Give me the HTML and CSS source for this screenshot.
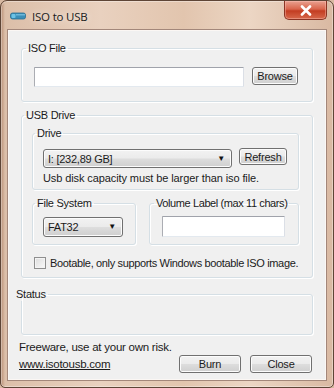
FILE: index.html
```html
<!DOCTYPE html>
<html>
<head>
    <title>ISO to USB</title>
    <meta charset="utf-8">
    <link rel="stylesheet" href="styles.css">
</head>
<body>
    <div class="window">
        <div class="titlebar">
            <svg class="app-icon" width="16" height="10" viewBox="0 0 16 10">
                <rect x="0.5" y="2" width="15" height="6" rx="2" fill="#3b8fb8" stroke="#2a6f93" stroke-width="0.8"/>
                <rect x="1.5" y="3" width="4" height="4" rx="1" fill="#6cc3e6"/>
                <rect x="6" y="3" width="9" height="1.5" fill="#8fd3ee" opacity="0.6"/>
            </svg>
            <span class="title">ISO to USB</span>
            <div class="close-btn">
                <svg width="12" height="11" viewBox="0 0 12 11">
                    <path d="M2 1.5 L10 9.5 M10 1.5 L2 9.5" stroke="#fff" stroke-width="2.6" stroke-linecap="round"/>
                </svg>
            </div>
        </div>

        <div class="client">
            <fieldset class="group iso-group">
                <legend>ISO File</legend>
                <div class="row">
                    <input type="text" class="textbox iso-path">
                    <button class="btn browse-btn">Browse</button>
                </div>
            </fieldset>

            <fieldset class="group usb-group">
                <legend>USB Drive</legend>
                <fieldset class="group drive-group">
                    <legend>Drive</legend>
                    <div class="row">
                        <div class="combo drive-combo"><span class="combo-text">I: [232,89 GB]</span><span class="arrow">&#9660;</span></div>
                        <button class="btn refresh-btn">Refresh</button>
                    </div>
                    <p class="hint">Usb disk capacity must be larger than iso file.</p>
                </fieldset>

                <div class="split">
                    <fieldset class="group fs-group">
                        <legend>File System</legend>
                        <div class="combo fs-combo"><span class="combo-text">FAT32</span><span class="arrow">&#9660;</span></div>
                    </fieldset>
                    <fieldset class="group vol-group">
                        <legend>Volume Label (max 11 chars)</legend>
                        <input type="text" class="textbox vol-input">
                    </fieldset>
                </div>

                <label class="check-row">
                    <span class="checkbox"></span>
                    <span>Bootable, only supports Windows bootable ISO image.</span>
                </label>
            </fieldset>

            <fieldset class="group status-group">
                <legend>Status</legend>
            </fieldset>

            <p class="note">Freeware, use at your own risk.</p>
            <div class="footer">
                <a class="site-link" href="#">www.isotousb.com</a>
                <div class="actions">
                    <button class="btn action-btn">Burn</button>
                    <button class="btn action-btn">Close</button>
                </div>
            </div>
        </div>
    </div>
</body>
</html>
```

FILE: styles.css
```css
* {
    box-sizing: border-box;
}

body {
    margin: 0;
    background: #d8b9a2;
    font-family: "Liberation Sans", Arial, sans-serif;
    font-size: 11px;
    letter-spacing: -0.25px;
    color: #1b1b1b;
    white-space: nowrap;
}

.window {
    width: 334px;
    height: 388px;
    padding: 0 6px 6px 6px;
    border: 1px solid #5e4536;
    border-radius: 7px 7px 5px 5px;
    background: linear-gradient(to right, #b88f76 0px, #dcbfa9 4px, #e9d1bf 30%, #e2c5ae 55%, #ecd6c4 75%, #d9b9a2 100%);
    display: flex;
    flex-direction: column;
    box-shadow: inset 0 0 0 1px rgba(255,255,255,0.35);
}

/* title bar */
.titlebar {
    height: 28px;
    display: flex;
    align-items: center;
    padding-left: 3px;
}

.app-icon {
    margin-top: 2px;
}

.title {
    margin-left: 6px;
    margin-top: 2px;
    font-family: "Open Sans", "Noto Sans", sans-serif;
    font-size: 11.5px;
    letter-spacing: -0.2px;
    color: #1a1a1a;
    text-shadow: 0 0 6px rgba(255,255,255,0.9);
}

.close-btn {
    margin-left: auto;
    align-self: flex-start;
    width: 43px;
    height: 19px;
    border: 1px solid #8a3424;
    border-top: none;
    border-radius: 0 0 5px 5px;
    background: linear-gradient(#e9a190 0%, #d9654c 45%, #c33d22 55%, #d7684b 100%);
    display: flex;
    align-items: center;
    justify-content: center;
    box-shadow: inset 0 0 0 1px rgba(255,200,190,0.4);
}

/* client area */
.client {
    flex: 1;
    background: #f0f0f0;
    border: 1px solid #a3877a;
    box-shadow: inset 0 0 0 1px #fbf7f4;
    padding: 11px 13px 0 13px;
    display: flex;
    flex-direction: column;
}

.group {
    margin: 0;
    border: 1px solid #d5dfe5;
    border-radius: 3px;
    box-shadow: inset 1px 1px 0 #fff, 1px 1px 0 #fff;
    min-width: 0;
}

.group legend {
    padding: 0 2px;
    margin-left: -8px;
    line-height: 14px;
}

.row {
    display: flex;
    align-items: flex-start;
}

.iso-group {
    padding: 12px 13px 14px 12px;
}

.iso-path {
    width: 210px;
    height: 20px;
}

.browse-btn {
    margin-left: 8px;
    width: 46px;
    height: 18px;
}

.usb-group {
    margin-top: 6px;
    padding: 4px 13px 7px 10px;
}

.drive-group {
    padding: 9px 10px 3px 10px;
}

.drive-combo {
    width: 189px;
    height: 19px;
}

.refresh-btn {
    margin-left: 7px;
    margin-top: -1px;
    width: 48px;
    height: 17px;
}

.hint {
    margin: 3px 0 0 0;
    line-height: 15px;
    letter-spacing: -0.1px;
}

.split {
    display: flex;
    gap: 13px;
    margin-top: 6px;
}

.fs-group {
    width: 104px;
    padding: 7px 10px 7px 10px;
}

.fs-combo {
    width: 80px;
    height: 20px;
}

.vol-group {
    flex: 1;
    padding: 6px 12px 7px 12px;
}

.vol-group legend {
    letter-spacing: -0.4px;
}

.vol-input {
    width: 123px;
    height: 21px;
}

.check-row {
    display: flex;
    align-items: center;
    margin-top: 11px;
    margin-left: 2px;
    gap: 4px;
    line-height: 14px;
    letter-spacing: -0.35px;
}

.checkbox {
    flex-shrink: 0;
    width: 12px;
    height: 12px;
    border: 1px solid #8f8f8f;
    background: linear-gradient(135deg, #dcdcdc, #fafafa);
    box-shadow: inset 0 0 0 1px #f4f4f4;
}

.status-group {
    margin-top: 9px;
    height: 48px;
    padding: 0;
}

.note {
    margin: 5px 0 0 -2px;
    line-height: 15px;
    font-size: 11.5px;
}

.footer {
    display: flex;
    align-items: center;
    margin-top: 0;
    margin-left: -2px;
}

.site-link {
    color: #1b1b1b;
    font-size: 11.5px;
    text-decoration: underline;
}

.actions {
    margin-left: auto;
    display: flex;
    gap: 9px;
    margin-right: 1px;
}

.action-btn {
    width: 62px;
    height: 18px;
}

/* controls */
.btn {
    font-family: inherit;
    font-size: 11px;
    letter-spacing: -0.2px;
    padding: 0;
    line-height: 14px;
    color: #1b1b1b;
    border: 1px solid #707070;
    border-radius: 3px;
    background: linear-gradient(#f2f2f2 0%, #ebebeb 48%, #dddddd 52%, #cfcfcf 100%);
    box-shadow: inset 0 0 0 1px #fcfcfc;
}

.textbox {
    border: 1px solid #abadb3;
    border-top-color: #a0a3ab;
    border-bottom-color: #e3e9ef;
    border-right-color: #dbdfe6;
    background: #fff;
    border-radius: 1px;
    padding: 0 3px;
    font-family: inherit;
    font-size: 11px;
}

.combo {
    display: flex;
    align-items: center;
    padding: 0 6px 0 4px;
    border: 1px solid #707070;
    border-radius: 3px;
    background: linear-gradient(#f2f2f2 0%, #ebebeb 48%, #dddddd 52%, #cfcfcf 100%);
    box-shadow: inset 0 0 0 1px #fcfcfc;
    line-height: 14px;
}

.combo-text {
    flex: 1;
}

.arrow {
    font-size: 8px;
    color: #111;
}
```
